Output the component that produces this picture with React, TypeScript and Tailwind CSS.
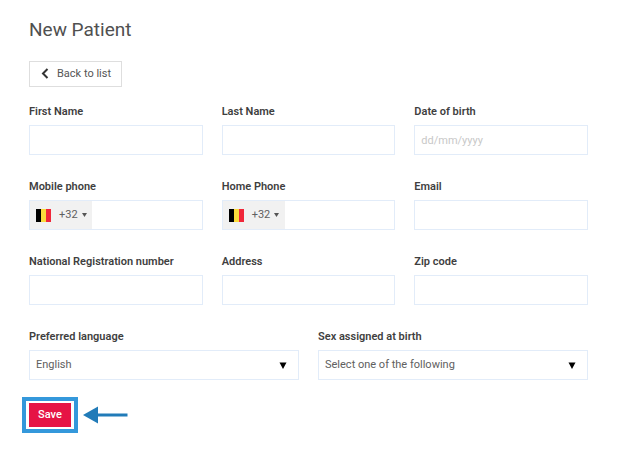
import { useId, useState } from "react";

const inputClass =
  "block h-[30px] w-full min-w-0 border border-[#e2ecf9] bg-white px-1.5 text-[11px] text-[#606060] outline-none placeholder:text-[#c8c8c8] focus:border-[#3498db]";

const labelClass = "mb-1 block text-[11px] leading-[18px] font-semibold text-[#3f3f3f]";

function TextField({
  label,
  type = "text",
  placeholder,
}: {
  label: string;
  type?: string;
  placeholder?: string;
}) {
  const id = useId();
  return (
    <div>
      <label htmlFor={id} className={labelClass}>
        {label}
      </label>
      <input id={id} type={type} placeholder={placeholder} className={inputClass} />
    </div>
  );
}

function BelgianFlag() {
  return (
    <svg width="15" height="13" viewBox="0 0 15 13" aria-hidden="true">
      <rect width="5" height="13" fill="#000" />
      <rect x="5" width="5" height="13" fill="#fbdc3c" />
      <rect x="10" width="5" height="13" fill="#f0273a" />
    </svg>
  );
}

function PhoneField({ label }: { label: string }) {
  const id = useId();
  return (
    <div>
      <label htmlFor={id} className={labelClass}>
        {label}
      </label>
      <div className="flex h-[30px] border border-[#e2ecf9] bg-white">
        <button
          type="button"
          aria-label="Country code"
          className="flex w-[62px] shrink-0 items-center bg-[#f1f1f1] pl-1.5 text-[11px] text-[#606060]"
        >
          <BelgianFlag />
          <span className="ml-2">+32</span>
          <svg className="ml-1" width="5" height="4" viewBox="0 0 5 4" aria-hidden="true">
            <path d="M0 0h5L2.5 4z" fill="#555" />
          </svg>
        </button>
        <input
          id={id}
          type="tel"
          className="w-full min-w-0 px-1.5 text-[11px] text-[#606060] outline-none"
        />
      </div>
    </div>
  );
}

function SelectField({ label, options }: { label: string; options: string[] }) {
  const id = useId();
  const [value, setValue] = useState(options[0]);
  return (
    <div>
      <label htmlFor={id} className={labelClass}>
        {label}
      </label>
      <div className="relative">
        <select
          id={id}
          value={value}
          onChange={(e) => setValue(e.target.value)}
          className={`${inputClass} appearance-none`}
        >
          {options.map((o) => (
            <option key={o}>{o}</option>
          ))}
        </select>
        <svg
          className="pointer-events-none absolute top-3 right-3"
          width="8"
          height="7"
          viewBox="0 0 8 7"
          aria-hidden="true"
        >
          <path d="M.5.5h7L4 7z" fill="#000" />
        </svg>
      </div>
    </div>
  );
}

export default function App() {
  return (
    <main className="min-h-screen bg-white pt-4 pr-9 pb-6 pl-[29px] font-['Roboto',sans-serif]">
      <h1 className="text-[19px] leading-7 text-[#505050]">New Patient</h1>

      <button
        type="button"
        className="mt-[17px] flex h-[26px] items-center border border-[#dedede] bg-white pr-2.5 pl-[11px] text-[11px] text-[#555]"
      >
        <svg width="8" height="12" viewBox="0 0 8 12" fill="none" aria-hidden="true">
          <path d="M6.5 1L2 5.500l4.500 4.500" stroke="#333" strokeWidth="2" />
        </svg>
        <span className="ml-2">Back to list</span>
      </button>

      <form className="mt-4" onSubmit={(e) => e.preventDefault()}>
        <div className="grid grid-cols-3 gap-x-[19px] gap-y-[23px]">
          <TextField label="First Name" />
          <TextField label="Last Name" />
          <TextField label="Date of birth" placeholder="dd/mm/yyyy" />
          <PhoneField label="Mobile phone" />
          <PhoneField label="Home Phone" />
          <TextField label="Email" type="email" />
          <TextField label="National Registration number" />
          <TextField label="Address" />
          <TextField label="Zip code" />
        </div>

        <div className="mt-[23px] grid grid-cols-2 gap-x-[19px]">
          <SelectField label="Preferred language" options={["English", "Nederlands", "Français"]} />
          <SelectField
            label="Sex assigned at birth"
            options={["Select one of the following", "Female", "Male"]}
          />
        </div>

        <div className="mt-[23px] flex items-center gap-3">
          {/* highlight frame around the save button */}
          <div className="relative">
            <button
              type="submit"
              className="block h-6 bg-[#e61445] px-[9px] text-[11px] font-medium text-white"
            >
              Save
            </button>
            <span className="pointer-events-none absolute -inset-x-[7px] -inset-y-1.5 border-4 border-[#3498db]" />
          </div>
          <svg width="45" height="18" viewBox="0 0 45 18" aria-hidden="true">
            <path d="M0 9L15 .5v17z" fill="#217bb8" />
            <path d="M14 9h30.500" stroke="#217bb8" strokeWidth="3" />
          </svg>
        </div>
      </form>
    </main>
  );
}
